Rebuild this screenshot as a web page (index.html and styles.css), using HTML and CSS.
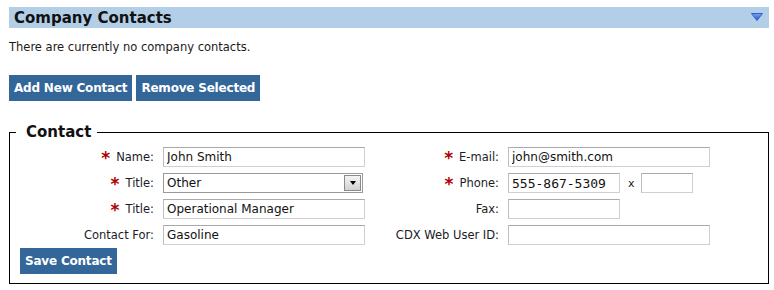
FILE: index.html
```html
<!DOCTYPE html>
<html>
<head>
    <meta charset="utf-8">
    <title>Company Contacts</title>
    <link rel="stylesheet" href="styles.css">
</head>
<body>
    <div class="section-header">
        <h2>Company Contacts</h2>
        <svg class="collapse-icon" width="12" height="8" viewBox="0 0 12 8">
            <defs>
                <linearGradient id="tri" x1="0" y1="0" x2="0" y2="1">
                    <stop offset="0" stop-color="#7fa8f0"/>
                    <stop offset="1" stop-color="#1d52c4"/>
                </linearGradient>
            </defs>
            <polygon points="0.5,0.5 11.5,0.5 6,7.5" fill="url(#tri)" stroke="#2a5fcf" stroke-width="1"/>
        </svg>
    </div>

    <p class="empty-note">There are currently no company contacts.</p>

    <div class="actions">
        <button class="btn">Add New Contact</button>
        <button class="btn">Remove Selected</button>
    </div>

    <fieldset class="contact-box">
        <legend>Contact</legend>
        <div class="contact-grid">
            <label class="req" for="name">Name:</label>
            <input type="text" id="name" value="John Smith">
            <label class="req" for="email">E-mail:</label>
            <input type="text" id="email" value="john@smith.com">

            <label class="req" for="title-type">Title:</label>
            <div class="select-wrap">
                <select id="title-type">
                    <option>Other</option>
                </select>
            </div>
            <label class="req" for="phone">Phone:</label>
            <div class="phone-group">
                <input type="text" id="phone" class="short mono" value="555-867-5309">
                <span class="ext-x">x</span>
                <input type="text" class="ext" aria-label="Extension">
            </div>

            <label class="req" for="title">Title:</label>
            <input type="text" id="title" value="Operational Manager">
            <label for="fax">Fax:</label>
            <div><input type="text" id="fax" class="short"></div>

            <label for="contact-for">Contact For:</label>
            <input type="text" id="contact-for" value="Gasoline">
            <label for="cdx">CDX Web User ID:</label>
            <input type="text" id="cdx">
        </div>
        <button class="btn save-btn">Save Contact</button>
    </fieldset>
</body>
</html>
```

FILE: styles.css
```css
body {
    margin: 0;
    padding: 7px 5px 0 9px;
    font-family: "DejaVu Sans", sans-serif;
    font-size: 11.5px;
    color: #1a1a1a;
}

.section-header {
    display: flex;
    align-items: center;
    justify-content: space-between;
    height: 21px;
    padding: 0 6px 0 5px;
    background-color: #b3cfe8;
}
.section-header h2 {
    margin: 0;
    font-size: 15px;
    font-weight: bold;
    color: #111;
}
.collapse-icon { margin-top: -2px; }

.empty-note { margin: 13px 0 0 0; line-height: 13px; }

.actions { display: flex; gap: 4px; margin-top: 21px; }

.btn {
    height: 26px;
    padding: 0 5px;
    border: none;
    background-color: #336699;
    color: #fff;
    font-family: "DejaVu Sans", sans-serif;
    font-size: 12px;
    font-weight: bold;
    letter-spacing: -0.2px;
    cursor: pointer;
}

.contact-box {
    margin: 22px 0 0 0;
    width: 760px;
    box-sizing: border-box;
    padding: 6px 0 9px 0;
    border: 1px solid #000;
}
.contact-box legend {
    margin-left: 6px;
    padding: 0 6px 0 10px;
    font-size: 15px;
    font-weight: bold;
    color: #111;
}

.contact-grid {
    display: grid;
    grid-template-columns: 144px 202px 125px 202px;
    column-gap: 9px;
    row-gap: 6px;
    align-items: center;
}
.contact-grid label { text-align: right; color: #1c1c28; }
.contact-grid label.req::before {
    content: "*";
    color: #b00000;
    font-weight: bold;
    font-size: 17px;
    line-height: 10px;
    margin-right: 6px;
    vertical-align: -3px;
}

input[type="text"] {
    height: 20px;
    width: 202px;
    box-sizing: border-box;
    padding: 0 3px;
    border: 1px solid #cfcfd4;
    border-top-color: #a9a9b0;
    border-left-color: #bdbdc4;
    font-family: "DejaVu Sans", sans-serif;
    font-size: 12px;
    color: #111;
}
input.short { width: 112px; }
input.ext { width: 52px; }
input.mono { font-family: "DejaVu Sans Mono", monospace; font-size: 13px; }

.phone-group { display: flex; align-items: center; }
.ext-x { margin: 0 6px 0 8px; font-size: 11px; }

.select-wrap { position: relative; width: 200px; height: 20px; }
.select-wrap select {
    appearance: none;
    width: 200px;
    height: 20px;
    padding: 0 3px;
    border: 1px solid #9a9a9a;
    background: #fff;
    font-family: "DejaVu Sans", sans-serif;
    font-size: 12px;
    color: #111;
}
.select-wrap::after {
    content: "";
    position: absolute;
    right: 2px;
    top: 2px;
    width: 15px;
    height: 14px;
    border: 1px solid #8a8a8a;
    background: linear-gradient(#f4f4f4, #d2d2d2);
    pointer-events: none;
}
.select-wrap::before {
    content: "";
    position: absolute;
    right: 7px;
    top: 8px;
    border-left: 3.5px solid transparent;
    border-right: 3.5px solid transparent;
    border-top: 4px solid #000;
    z-index: 1;
    pointer-events: none;
}

.save-btn { margin: 3px 0 0 10px; padding: 0 5px; }
```
